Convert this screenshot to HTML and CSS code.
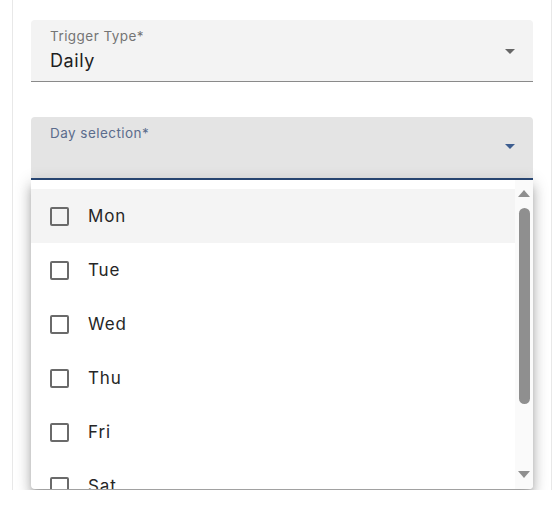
FILE: index.html
```html
<!DOCTYPE html>
<html lang="en">
<head>
    <meta charset="UTF-8">
    <meta name="viewport" content="width=device-width, initial-scale=1.0">
    <title>Trigger settings</title>
    <link rel="stylesheet" href="styles.css">
</head>
<body>
    <div class="panel">
        <div class="field">
            <div class="field-text">
                <span class="field-label">Trigger Type*</span>
                <span class="field-value">Daily</span>
            </div>
            <span class="field-arrow"></span>
        </div>

        <div class="select-wrap">
            <div class="field field-open">
                <div class="field-text">
                    <span class="field-label">Day selection*</span>
                    <span class="field-value"></span>
                </div>
                <span class="field-arrow"></span>
            </div>

            <div class="menu">
                <ul class="options">
                    <li class="option hover"><span class="checkbox"></span>Mon</li>
                    <li class="option"><span class="checkbox"></span>Tue</li>
                    <li class="option"><span class="checkbox"></span>Wed</li>
                    <li class="option"><span class="checkbox"></span>Thu</li>
                    <li class="option"><span class="checkbox"></span>Fri</li>
                    <li class="option"><span class="checkbox"></span>Sat</li>
                    <li class="option"><span class="checkbox"></span>Sun</li>
                </ul>
                <div class="scrollbar">
                    <span class="scroll-up"></span>
                    <span class="scroll-thumb"></span>
                    <span class="scroll-down"></span>
                </div>
            </div>
        </div>
    </div>
</body>
</html>
```

FILE: styles.css
```css
* {
    margin: 0;
    padding: 0;
    box-sizing: border-box;
}

body {
    background-color: #ffffff;
    font-family: "Inter", "Noto Sans", sans-serif;
    color: #222222;
}

.panel {
    margin: 0 8px 0 12px;
    height: 490px;
    padding: 20px 18px 0 18px;
    border-left: 1px solid #e8e8e8;
    border-right: 1px solid #e8e8e8;
}

.field {
    height: 62px;
    display: flex;
    align-items: flex-start;
    justify-content: space-between;
    padding: 8px 18px 0 19px;
    background-color: #f3f3f3;
    border-radius: 4px 4px 0 0;
    border-bottom: 1px solid #8a8a8a;
}

.field-text {
    display: flex;
    flex-direction: column;
}

.field-label {
    font-size: 13.5px;
    line-height: 16px;
    letter-spacing: 0.45px;
    color: #757575;
}

.field-value {
    margin-top: 5px;
    font-size: 18px;
    line-height: 24px;
    height: 24px;
    letter-spacing: 0.6px;
    color: #1e1e1e;
}

.field-arrow {
    width: 0;
    height: 0;
    margin-top: 21px;
    border-left: 5px solid transparent;
    border-right: 5px solid transparent;
    border-top: 5px solid #666666;
}

.select-wrap {
    position: relative;
    margin-top: 35px;
}

.field-open {
    height: 63px;
    background-color: #e4e4e4;
    border-bottom: 2px solid #2b4a78;
}

.field-open .field-label {
    color: #5b6c8c;
}

.field-open .field-arrow {
    margin-top: 19px;
    border-top-color: #3d5d8f;
}

/* menu opened under the select */
.menu {
    position: absolute;
    top: 100%;
    left: 0;
    right: 0;
    height: 309px;
    display: flex;
    background-color: #ffffff;
    border-radius: 0 0 4px 4px;
    overflow: hidden;
    box-shadow: 0 5px 6px -3px rgba(0, 0, 0, 0.25),
                0 9px 12px 1px rgba(0, 0, 0, 0.16),
                0 3px 16px 2px rgba(0, 0, 0, 0.14);
}

.options {
    flex: 1;
    list-style: none;
    padding-top: 9px;
    overflow: hidden;
}

.option {
    height: 54px;
    display: flex;
    align-items: center;
    gap: 19px;
    padding-left: 19px;
    font-size: 17px;
    letter-spacing: 0.9px;
    color: #262626;
}

.option.hover {
    background-color: #f4f4f4;
}

.checkbox {
    width: 19px;
    height: 19px;
    border: 2px solid #6a6a6a;
    border-radius: 2px;
}

.scrollbar {
    width: 18px;
    display: flex;
    flex-direction: column;
    align-items: center;
    padding: 10px 0 11px 0;
    background-color: #fafafa;
}

.scroll-up,
.scroll-down {
    width: 0;
    height: 0;
    border-left: 6px solid transparent;
    border-right: 6px solid transparent;
}

.scroll-up {
    border-bottom: 7px solid #8f8f8f;
}

.scroll-down {
    margin-top: auto;
    border-top: 7px solid #8f8f8f;
}

.scroll-thumb {
    width: 11px;
    height: 196px;
    margin-top: 11px;
    border-radius: 6px;
    background-color: #8f8f8f;
}
```
